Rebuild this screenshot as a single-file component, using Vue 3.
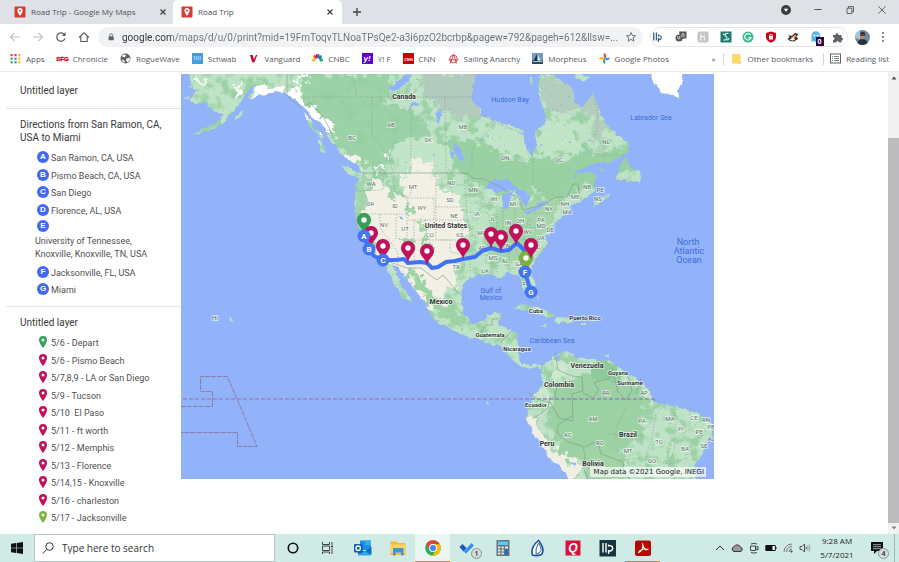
<script setup>
import { ref } from 'vue'

const address = ref('google.com/maps/d/u/0/print?mid=19FmToqvTLNoaTPsQe2-a3i6pzO2bcrbp&pagew=792&pageh=612&llsw=...')
const query = ref('')

const bookmarks = [
  ['apps', 'Apps'], ['sfg', 'Chronicle'], ['globe', 'RogueWave'], ['schwab', 'Schwab'],
  ['vanguard', 'Vanguard'], ['cnbc', 'CNBC'], ['yahoo', 'Y! F'], ['cnn', 'CNN'],
  ['anarchy', 'Sailing Anarchy'], ['boat', 'Morpheus'], ['photos', 'Google Photos'],
]

const stops = [
  ['A', 'San Ramon, CA, USA'], ['B', 'Pismo Beach, CA, USA'], ['C', 'San Diego'], ['D', 'Florence, AL, USA'],
  ['E', 'University of Tennessee, Knoxville, Knoxville, TN, USA'], ['F', 'Jacksonville, FL, USA'], ['G', 'Miami'],
]

const green = '#33a15a'
const berry = '#c2105c'
const lime = '#7cb342'
const days = [
  ['5/6 - Depart', green], ['5/6 - Pismo Beach', berry], ['5/7,8,9 - LA or San Diego', berry], ['5/9 - Tucson', berry],
  ['5/10  El Paso', berry], ['5/11 - ft worth', berry], ['5/12 - Memphis', berry], ['5/13 - Florence', berry],
  ['5/14,15 - Knoxville', berry], ['5/16 - charleston', berry], ['5/17 - Jacksonville', lime],
]

const states = [
  ['AB', 391, 125], ['MB', 463, 127], ['SK', 428, 140], ['BC', 352, 138], ['ON', 505, 158], ['QC', 559, 160], ['NL', 606, 142],
  ['WA', 371, 184], ['MT', 413, 187], ['OR', 370, 204], ['ID', 395, 206], ['WY', 422, 208], ['ND', 451, 183], ['SD', 450, 200],
  ['MN', 473, 190], ['WI', 494, 199], ['MI', 513, 204], ['NB', 587, 187], ['PE', 600, 190], ['NS', 598, 199], ['ME', 575, 197],
  ['NH', 565, 204], ['NY', 549, 209], ['MA', 567, 212], ['NV', 384, 225], ['UT', 405, 229], ['CO', 430, 235], ['NE', 454, 216],
  ['IA', 477, 214], ['IL', 493, 219], ['IN', 508, 223], ['OH', 520, 221], ['PA', 541, 220], ['MD', 541, 226], ['DE', 550, 230],
  ['KS', 460, 235], ['MO', 482, 233], ['WV', 528, 232], ['VA', 541, 238], ['NC', 536, 247], ['TN', 506, 246], ['AR', 482, 248],
  ['MS', 493, 258], ['AL', 505, 261], ['GA', 519, 264], ['LA', 485, 271], ['TX', 456, 267], ['FL', 526, 284], ['HI', 215, 318],
  ['RR', 606, 393], ['AP', 644, 393], ['AM', 593, 419], ['PA', 642, 421], ['MA', 670, 419], ['CE', 694, 418], ['RN', 706, 420],
  ['PI', 681, 429], ['PE', 699, 432], ['PB', 711, 427], ['AL', 711, 439], ['SE', 704, 446], ['BA', 685, 449], ['TO', 659, 442],
  ['AC', 568, 435], ['RO', 600, 443], ['MT', 628, 451], ['GO', 652, 461],
]
const countries = [
  ['Canada', 404, 96], ['United States', 446, 225], ['Mexico', 441, 301], ['Venezuela', 587, 365], ['Colombia', 559, 384],
  ['Brazil', 628, 434], ['Peru', 547, 443], ['Bolivia', 593, 463],
]
const smallCountries = [
  ['Cuba', 536, 311], ['Puerto Rico', 585, 318], ['Guatemala', 490, 335], ['Nicaragua', 517, 349], ['Guyana', 618, 373],
  ['Suriname', 630, 383], ['Ecuador', 536, 405],
]
const waters = [
  ['Hudson Bay', 510, 100], ['Labrador Sea', 651, 118], ['Gulf of', 491, 291], ['Mexico', 491, 298], ['Caribbean Sea', 552, 341],
]
const ocean = [['North', 688, 242], ['Atlantic', 689, 251], ['Ocean', 689, 260]]

const pins = [
  [364, 220, green], [371, 233, berry], [383, 246, berry], [408, 248, berry], [427, 251, berry], [463, 245, berry],
  [491, 234, berry], [501, 237, berry], [516, 231, berry], [526, 258, lime], [531, 245, berry],
]
const badges = [['A', 364, 236], ['B', 369, 249], ['C', 383, 260], ['F', 525, 272], ['G', 531, 292]]
</script>

<template>
  <div class="screen">
    <header>
      <div class="tabs">
        <button v-for="(t, i) in ['Road Trip - Google My Maps', 'Road Trip']" :key="t" class="tab" :class="{ active: i === 1 }">
          <svg class="i12" viewBox="0 0 12 12"><rect x=".5" y=".5" width="11" height="11" rx="1" fill="#d23f31" /><path d="M6 2a2.6 2.6 0 0 0-2.6 2.6C3.4 6.500 6 10 6 10s2.600-3.500 2.600-5.400A2.600 2.600 0 0 0 6 2z" fill="#fff" /><circle cx="6" cy="4.600" r="1" fill="#d23f31" /></svg>
          <span>{{ t }}</span>
          <svg class="i8" viewBox="0 0 8 8"><path d="M1.500 1.500l5 5m0-5l-5 5" stroke="#3c4043" stroke-width="1.200" /></svg>
        </button>
        <button class="plain newtab" aria-label="New tab"><svg class="i10" viewBox="0 0 10 10"><path d="M5 1v8M1 5h8" stroke="#3c4043" stroke-width="1.300" /></svg></button>
        <div class="window-controls">
          <button class="plain" aria-label="Tab search"><svg class="i10" viewBox="0 0 10 10"><circle cx="5" cy="5" r="5" fill="#3c4043" /><path d="M2.800 3.800h4.400L5 6.800z" fill="#fff" /></svg></button>
          <button class="plain" aria-label="Minimize"><svg class="i10" viewBox="0 0 10 10"><path d="M1.500 4.500h7" stroke="#444" stroke-width=".9" /></svg></button>
          <button class="plain" aria-label="Restore"><svg class="i10" viewBox="0 0 10 10" fill="none" stroke="#444" stroke-width=".8"><path d="M2 3.200h4.800V8.500H2zM3.500 3V1.600h5V7H7" /></svg></button>
          <button class="plain" aria-label="Close"><svg class="i10" viewBox="0 0 10 10"><path d="M1.500 1.500l7 7m0-7l-7 7" stroke="#444" stroke-width=".8" /></svg></button>
        </div>
      </div>

      <div class="toolbar">
        <div class="nav">
          <button class="plain" aria-label="Back"><svg class="i12" viewBox="0 0 12 12" fill="none" stroke="#bdc1c6" stroke-width="1.100"><path d="M11 6H1.500M5.500 2l-4 4 4 4" /></svg></button>
          <button class="plain" aria-label="Forward"><svg class="i12" viewBox="0 0 12 12" fill="none" stroke="#bdc1c6" stroke-width="1.100"><path d="M1 6h9.500M6.500 2l4 4-4 4" /></svg></button>
          <button class="plain" aria-label="Reload"><svg class="i12" viewBox="0 0 12 12" fill="none" stroke="#5f6368" stroke-width="1.300"><path d="M10 7.400A4.200 4.200 0 1 1 9 3.100" /><path d="M10.600 1v4H6.700z" fill="#5f6368" stroke="none" /></svg></button>
          <button class="plain" aria-label="Home"><svg class="i12" viewBox="0 0 12 12" fill="none" stroke="#5f6368" stroke-width="1.200"><path d="M1 6.500L6 1.800l5 4.700M2.800 5.500v5h6.400v-5" /></svg></button>
        </div>
        <label class="address">
          <svg class="i8" viewBox="0 0 8 10"><rect x="1" y="4" width="6.400" height="5" rx=".6" fill="#5f6368" /><path d="M2.400 4V2.700a1.800 1.800 0 0 1 3.600 0V4" fill="none" stroke="#5f6368" /></svg>
          <input v-model="address" type="text" aria-label="Address" />
          <svg class="i12" viewBox="0 0 12 12"><path d="M6 1.500l1.300 3 3.200.3-2.400 2.100.7 3.200L6 8.400l-2.800 1.700.7-3.200L1.500 4.800l3.200-.3z" fill="none" stroke="#5f6368" stroke-width=".9" /></svg>
        </label>
        <div class="extensions">
          <svg class="i12" viewBox="0 0 12 12" fill="none" stroke="#3d5f80" stroke-width="1.300"><path d="M1.700 1.500v8M4.400 1.500v8M6.500 3.500v2M6.500 7v4" /><path d="M6.800 4.800C10.200 4 10.200 9 6.800 8.500" stroke-width="1.100" /></svg>
          <svg class="i12" viewBox="0 0 12 12"><path d="M4 .5h7.500v7H8L6 10z" fill="#555" /><circle cx="4" cy="7" r="3.500" fill="#555" /><path d="M2.800 5v2.500q1 1 2 0V5M7 6V3q1.200-1 2 0v3" fill="none" stroke="#eee" stroke-width=".8" /></svg>
          <svg class="i12" viewBox="0 0 12 12"><rect x=".5" y=".5" width="11" height="11" rx="2" fill="#c4c4c4" /><path d="M3.800 2.500v7M3.800 6l3.400-1v4.500M7.500 2.500v1" stroke="#fff" fill="none" /></svg>
          <svg class="i12" viewBox="0 0 12 12"><rect x=".5" y=".5" width="11" height="11" fill="#1f7a70" /><path d="M8.500 2.500C5 1.800 4 4 6 5.500s1 4-2.500 3.500M3 3l2 1M9 7L7.500 9.500" stroke="#d6f1ec" fill="none" stroke-width="1.200" /></svg>
          <svg class="i12" viewBox="0 0 12 12"><circle cx="6" cy="6" r="5.500" fill="#35b88f" /><path d="M8.600 4A3.200 3.200 0 1 0 9 6.700H6.500" fill="none" stroke="#fff" stroke-width="1.200" /></svg>
          <svg class="i12" viewBox="0 0 12 12"><path d="M6 .5L11 2v4c0 3-2 4.500-5 5.700C3 10.500 1 9 1 6V2z" fill="#d0021b" /><rect x="4" y="5" width="4" height="3.500" fill="#fff" /><path d="M4.800 5V3.700q1.200-1 2.400 0V5" fill="none" stroke="#fff" stroke-width=".8" /></svg>
          <svg class="i12" viewBox="0 0 12 12"><path d="M.5 8l2-2L1 4.500l4 .3L8 2l3.500 1-2 2.500L11 8l-4 2.500-4-.5z" fill="#33302d" /><path d="M3.500 7l5-3.500 1 1-2 3z" fill="#e7a64c" /><path d="M2.500 8.500l4-2 1.500 2.500-3 .5z" fill="#fff" /></svg>
          <span class="ghost">
            <svg class="i12" viewBox="0 0 12 12"><path d="M1.500 11V4.500a4.300 4.300 0 0 1 8.600 0V11L8 9.800l-2.200 1.400-2-1.400z" fill="#55b3ec" /><circle cx="4.300" cy="4.500" r="1" fill="#fff" /><circle cx="7.500" cy="4.500" r="1" fill="#fff" /></svg>
            <b>0</b>
          </span>
          <svg class="i12" viewBox="0 0 12 12"><path d="M1 4h2.500a1.500 1.500 0 1 1 3-.5V4H9.500v2.500a1.500 1.500 0 1 1 0 3V11.500H7a1.500 1.500 0 0 0-3 0H1V9a1.500 1.500 0 0 0 0-3z" fill="#5f6368" /></svg>
        </div>
        <svg class="i15" viewBox="0 0 15 15"><circle cx="7.500" cy="7.500" r="7.500" fill="#6f8aa2" /><path d="M0 7.500a7.500 7.500 0 0 1 5-7v9z" fill="#a9c4da" /><path d="M2.500 13q1-4 5-4t5 4a7.500 7.500 0 0 1-10 0z" fill="#26313d" /><ellipse cx="7.700" cy="5.800" rx="2.600" ry="3.500" fill="#b98467" /><path d="M5 4.500q.3-2.800 2.800-2.800t2.600 2.800z" fill="#35302d" /><path d="M5.200 5.200h5" stroke="#222" /></svg>
        <button class="plain" aria-label="Menu"><svg class="i12" viewBox="0 0 12 12" fill="#5f6368"><circle cx="6" cy="2" r="1" /><circle cx="6" cy="6" r="1" /><circle cx="6" cy="10" r="1" /></svg></button>
      </div>

      <nav class="bookmarks">
        <a v-for="[icon, name] in bookmarks" :key="name" href="#">
          <svg class="i11" viewBox="0 0 11 11">
            <g v-if="icon === 'apps'"><rect x="0.500" y="1" width="2.200" height="2.200" fill="#ea4335" /><rect x="4.400" y="1" width="2.200" height="2.200" fill="#ea4335" /><rect x="8.300" y="1" width="2.200" height="2.200" fill="#fbbc04" /><rect x="0.500" y="4.600" width="2.200" height="2.200" fill="#34a853" /><rect x="4.400" y="4.600" width="2.200" height="2.200" fill="#4285f4" /><rect x="8.300" y="4.600" width="2.200" height="2.200" fill="#fbbc04" /><rect x="0.500" y="8.200" width="2.200" height="2.200" fill="#34a853" /><rect x="4.400" y="8.200" width="2.200" height="2.200" fill="#34a853" /><rect x="8.300" y="8.200" width="2.200" height="2.200" fill="#fbbc04" /></g>
            <text v-else-if="icon === 'sfg'" class="heavy" x="5.500" y="8" font-size="6" fill="#cf1028" stroke="#cf1028" stroke-width=".4">SFG</text>
            <g v-else-if="icon === 'globe'"><circle cx="5.500" cy="5.500" r="5" fill="#5f6368" /><path d="M1.500 3l3 1.500 1.500-2L5 1.200 3 2zM6 6l3.500-1.500L10 7 7.500 9.500 6.500 8zM2 6.500l2.500 1V10L2.500 8.500z" fill="#fff" /></g>
            <g v-else-if="icon === 'schwab'"><rect width="11" height="11" fill="#3f9fdf" /><path d="M1.500 4h8M2 6h7" stroke="#d7eefb" stroke-width="1.100" stroke-dasharray="1.500 .5" /></g>
            <path v-else-if="icon === 'vanguard'" d="M2 2h2.700l1.200 4.500L8 2h1.300L6.400 9.300H4.200z" fill="#c20029" />
            <g v-else-if="icon === 'cnbc'"><ellipse cx="1.800" cy="7" rx="1.800" ry="1.500" fill="#fcb711" /><ellipse cx="2.800" cy="4" rx="1.500" ry="2.200" transform="rotate(-35 2.800 4)" fill="#f37021" /><ellipse cx="4.700" cy="3.300" rx="1.200" ry="2.300" fill="#cc004c" /><ellipse cx="6.500" cy="3.300" rx="1.200" ry="2.300" fill="#6460aa" /><ellipse cx="8.200" cy="4.300" rx="1.500" ry="2.200" transform="rotate(35 8.200 4.300)" fill="#0089d0" /><ellipse cx="9.200" cy="7" rx="1.800" ry="1.500" fill="#0db14b" /></g>
            <g v-else-if="icon === 'yahoo'"><rect width="11" height="11" fill="#6001d2" /><text class="heavy" x="5" y="8" font-size="8" font-style="italic" fill="#fff">y!</text></g>
            <g v-else-if="icon === 'cnn'"><rect width="11" height="11" fill="#c00" /><text class="heavy" x="5.500" y="7.500" font-size="4" fill="#fff">CNN</text></g>
            <g v-else-if="icon === 'anarchy'" fill="none" stroke="#d64a58"><circle cx="5.500" cy="6" r="3.800" /><path d="M2.500 10.500L5.500 1l3 9.500M.5 6.800h10" /></g>
            <g v-else-if="icon === 'boat'"><rect width="11" height="11" fill="#6d9cc6" /><rect y="7.500" width="11" height="3.500" fill="#344a60" /><path d="M5 1v7H1.500z" fill="#233" /><path d="M6 1.500l2.500 6H6z" fill="#dfe6ec" /><path d="M1 8.500h9" stroke="#ddd" stroke-width=".8" /></g>
            <g v-else><path d="M5.300 5.300V.5a2.700 2.700 0 0 1 0 4.800z" fill="#ea4335" stroke="#ea4335" /><path d="M5.700 5.300h4.800a2.700 2.700 0 0 1-4.800 0z" fill="#4285f4" stroke="#4285f4" /><path d="M5.700 5.900v4.600a2.700 2.700 0 0 1 0-4.600z" fill="#34a853" stroke="#34a853" /><path d="M5.200 5.900H.5a2.700 2.700 0 0 1 4.700 0z" fill="#fbbc04" stroke="#fbbc04" /></g>
          </svg>{{ name }}
        </a>
        <div class="bookmarks-end">
          <button class="plain more">»</button>
          <a href="#"><svg class="i11" viewBox="0 0 11 11"><path d="M1 1h8.500v9.500H1z" fill="#fbd96b" /><path d="M9.500 8v2.500H7z" fill="#f0c038" /></svg>Other bookmarks</a>
          <a href="#"><svg class="i11" viewBox="0 0 11 11" fill="none" stroke="#5f6368"><rect x=".5" y="1" width="10" height="9" /><path d="M2 3.500h1M4 3.500h5M2 5.500h1M4 5.500h5M2 7.500h1M4 7.500h5" stroke-width=".8" /></svg>Reading list</a>
        </div>
      </nav>
    </header>

    <main>
      <aside>
        <section class="first"><h2>Untitled layer</h2></section>
        <section>
          <h2>Directions from San Ramon, CA, USA to Miami</h2>
          <ul>
            <li v-for="[letter, name] in stops" :key="letter" :class="{ long: letter === 'E' }"><i class="dot">{{ letter }}</i><span>{{ name }}</span></li>
          </ul>
        </section>
        <section>
          <h2>Untitled layer</h2>
          <ul>
            <li v-for="[name, color] in days" :key="name">
              <svg class="pin" viewBox="0 0 12 12"><path d="M6 0a4 4 0 0 0-4 4C2 7 6 12 6 12s4-5 4-8a4 4 0 0 0-4-4z" :fill="color" /><circle cx="6" cy="4" r="1.500" fill="#fff" /></svg><span>{{ name }}</span>
            </li>
          </ul>
        </section>
      </aside>

      <svg class="map" viewBox="181 74 533 405" role="img" aria-label="Road trip map">
        <defs>
          <filter id="rough" x="-5%" y="-5%" width="110%" height="110%" color-interpolation-filters="sRGB">
            <feTurbulence type="fractalNoise" baseFrequency=".11" numOctaves="4" seed="4" />
            <feDisplacementMap in="SourceGraphic" scale="20" xChannelSelector="R" yChannelSelector="G" />
          </filter>
          <filter id="coast" x="-5%" y="-5%" width="110%" height="110%" color-interpolation-filters="sRGB">
            <feTurbulence type="fractalNoise" baseFrequency=".16" numOctaves="3" seed="9" />
            <feDisplacementMap in="SourceGraphic" scale="5" xChannelSelector="R" yChannelSelector="G" />
          </filter>
          <filter id="mottle" x="0" y="0" width="100%" height="100%" color-interpolation-filters="sRGB">
            <feTurbulence type="fractalNoise" baseFrequency=".09" numOctaves="5" seed="12" />
            <feColorMatrix values="0 0 0 0 .61  0 0 0 0 .82  0 0 0 0 .65  5 0 0 0 -2.400" />
          </filter>
          <filter id="specks" x="0" y="0" width="100%" height="100%" color-interpolation-filters="sRGB">
            <feTurbulence type="fractalNoise" baseFrequency=".25" numOctaves="2" seed="31" />
            <feColorMatrix values="0 0 0 0 .57  0 0 0 0 .7  0 0 0 0 .97  0 14 0 0 -10.200" />
          </filter>
          <mask id="land" maskUnits="userSpaceOnUse" x="181" y="74" width="533" height="405">
            <g filter="url(#coast)" fill="#fff">
              <path d="M190 68l1 12-3 7 9 4-7 9 6 4 9-2 5 7 6 3 7 2-6 8-12 6-12 7 15-4 15-8 12-13 5-7 5-8 6-8 4-2-7 14 12-4 17-3 13 3 10 8 7 7 5 8 8 5 7 9 5 10 8 8 5 8 12 7 4 5-1 8-4 7-1 12-1 13 3 10 4 13 6 10 5 10 10 9 5 5 5 13 5 8 6 9 10 7-3-7-7-10-6-12-5-10 6 2 7 10 10 13 10 12 5 13 10 8 10 6 15 8 13 1 5 4 17 4 8 9 10 10 12 4 8-3 4 8v11l-9 12-5 10-1 12 6 13 9 13 8 14 15 13 7 12h123v-20l7-8 3-12 7-10 1-10-6-5-10-6-14-4-16-5-14-3-3-10-8-8-15-10-17-12-17-1-16-2-10-7-14 5-6 7-7 2-10 0-10-2-2-15-1-14-10-6-9-3 4-12h-14l-3 8-12 3-10-13-2-15 4-15 13-6 12-1 10 4 7-5 11 2 4 9 6 12 5 2v-9l-3-13 2-10 6-10 10-12-3-6 5-5 7-12 8-7 7-3-2-5 5-3 8-3 12-9 1-12-3-6h-13l-14 10 17-15 14-5 16-1 15-10v-9l-11-8-12-12-7-16-5-14-5 7-6 8-7-6-2-14-10-6-10-7-13-1-1 14 2 14 4 10v12l-10 8 2 14-5 10-7-9-2-16-23-9-18-6-2-7-7-8v-15l7-22z" />
              <path d="M518 272l13-4 2 10 3 12-1 8-7-2-6-10z" />
              <path d="M340 164l8 2 13 9-1 4-12-5z M318 140l5 2 3 11-4-1z M304 112l8 9 3 10-5-4z M235 116l8-6-2 7-6 3z M313 128l5 2 5 6-1 4z" />
              <path d="M615 180l7-19 6-5 1 11 10 4 2 12-9-2-8-1z M593 203l14-10 4 1-12 9-6 4z M583 178l12-5 1 5-12 4z M597 168l8 2-3 2z" />
              <path d="M513 308l9-4 12 3 14 5 8 4-7 2-14-5-12-3z M555 318l10-1 10 4-8 3-12-2z M540 325l7 0-1 2z M581 323l5 0v2h-5z" />
              <path d="M228 317l4 1 1 3-4-1z M220 310l2 1-1 1z M184 97l5-2 1 3-5 1z M486 402l2-1v3z M537 294l3 6h-2z M604 356l4-2v3z" />
              <path d="M650 68h33l-1 14-4 8 1 8-11-4-8-1-6-12z M530 78l3 0-1 6-2-1z M575 73l13 3-3 5-9-2z" />
            </g>
          </mask>
        </defs>
        <rect x="181" y="74" width="533" height="405" fill="#92b3fa" />
        <g mask="url(#land)">
          <rect x="181" y="74" width="533" height="405" fill="#bfe3c6" />
          <rect x="181" y="74" width="533" height="405" filter="url(#mottle)" />
          <g filter="url(#rough)">
            <path d="M300 74h90l-5 30 25 5 25 25-25 10-18 8-8 18 2 34-9-20 2-12-12-4-30-20-30-40z" fill="#97cfa2" opacity=".85" />
            <path d="M440 140l35 0 20 10 30 12 30-2 22-8 40-2 25-2-4 20-30 8-25 14-30 10-20-12-20 8-40-12-28-20z" fill="#9ad1a3" />
            <path d="M418 74h60l2 45-25-4-35-20z" fill="#b2cbbd" />
            <path d="M540 74l50 12 14 40-6 26-8-40-20 0-14 3-14-10z" fill="#b4cebd" />
            <path d="M545 120l28 4 10 25-25 5-25-8z" fill="#c2e5c8" />
            <path d="M395 140h40l20 12-4 20-38-1-20-10z" fill="#c2e4c7" />
            <path d="M497 125l28 12 4 20-30-6-20-10z" fill="#c2e4c7" />
            <path d="M500 205l40-5 25-5-15 30-15 25-25 15-25-15z" fill="#a5d5aa" />
            <path d="M375 174l-2 12-7 8-4 12 2 25 15 32 15 2 12 20 14 20 18 7 10 5-4-24 12-9-2-14 12-26-3-38-20-18-7-12-23-5-10 3-4 10 6 12-10-3z" fill="#f2efe4" />
            <path d="M412 165l6-6 14 5 2 10-20 2z" fill="#f2efe4" />
            <path d="M362 177l6 0 0 24-4 12 12 35 2 14-16-16-9-30 3-30z M405 205l4-2 4 12-5 2z M388 180l8 0 3 14-7 10z M420 215l5 10 8 32-7-4z M400 240l15-2-4 6z" fill="#a3d4aa" />
            <path d="M403 270l15 5 13 14 14 16 19 9 7 9-10 2-16-5-15-15z" fill="#9fd3a5" />
            <path d="M552 385l55-14 30 16 10 13-8 40-30 18-50 2-8-38z" fill="#9bd1a3" />
            <path d="M596 358l-6 20 30 4-5-18z" fill="#8fca9a" />
            <path d="M578 448l30 0 18 10 0 24h-38z" fill="#a0d3a6" />
            <path d="M526 412l6 1 8 20 12 16 13 6 12 10 0 14-10 6-20-20-20-30z" fill="#f1eee4" />
            <path d="M668 430l3 25-4 5zM553 360l20 2-20 26zM540 390l8-4-10 30z" fill="#cfe9d0" />
            <path d="M256 88l22-1 12 4 10-6 2 12 8 10 22 18 4 13-22-14-18-12-14-8-16-3-20 4z M300 74l10 8-12-3z M238 85l6-4-3 17-5 1z" fill="#fff" />
            <path d="M345 153l12 4 5 8-12-2z M380 150l8 4-2 6z M378 165l7 2-3 5z M190 86l14-8 2 6z" fill="#f2f3ee" />
            <path d="M640 68h60v34h-50z" fill="#fff" />
          </g>
          <rect x="400" y="74" width="210" height="100" filter="url(#specks)" />
          <g filter="url(#coast)" fill="#92b3fa">
            <path d="M388 89l8-5 6-8 10-3-2 8-8 6-8 3z M410 106l4-4 8 1-5 4z M437 110l4 4-2 10-3-8z M454 143l8 8 3 12-7-4-4-9z M450 147l4 6-2 10z" />
            <path d="M485 188l10-9 14 1 10 10-12 0-10 2z M503 195l10-5-4 12-2 10-4-4z M513 190l12 1 5 8-4 8-6-8z M523 212l12-5 9-4-2 4-14 7z M536 203l12-2-2 3-8 2z M400 216l3 2 0 3-3-2z M572 462l4 2 0 3-5-3z M555 358l4-3 1 7z" />
          </g>
        </g>

        <g class="borders">
          <path class="solid" d="M362 173h106l4 5 12 1 15 7 12 8 8 4 4 12 22-6 10-7 12 0 6-13 5 0 2 14 2 3M382 262l8 0 17 6h14l10 8 6 4 6-5 8 9 6 8 7 5M287 74v22l14 12 9-5 12 12 10 18M480 334l6-9h6v-6h7M500 343l12-12M517 349h-8M542 363v7M555 352l3 18 14 6 10 1 1 14-11 3 1 27-14-3-8-15-14-4-8-6M558 384l-3 10 0 6M550 396l-2 12-14 10M573 415l-15 10-1 8 11 9 14 4 3 8-1 15 4 10M585 447l13-6 3 13 22 8 1 12 12 10M583 393l10 5 6-8-5-7 15-5 4-10M614 376l4 16 8 8 6-10-4-13M641 378l-5 16" />
          <path class="dash" d="M300 97h174M372 97v38l18 24 3 14M411 97v76M445 97l1 76M473 149l22-27-15-8M472 149v24M495 122l28 12M533 159v28l20 8M593 95l5 20-2 20-14 10 12 10h30M352 74l4 15v8" />
          <path class="dash" d="M357 191l26-1v-17M357 214h50V198l4-4v-5M391 173l4 20 12 6M408 198h26v22h-27M436 173v46M407 214v26h45M396 214v24l-14 15M380 214l0 14 18 24v13M414 220v45M436 220v20M435 185h30M435 207h30M436 220h32M440 240h30M464 173l3 45 4 22M450 244v8l20 4v15M471 203h15M467 212h20l4 8M472 235h15l2 20h-18M497 210v18l-7 22M503 208v22M515 208v18M489 240h40M497 250v22M509 250v22M516 250l6 16-10 3M487 255l-2 8 11 1M528 220l-4 20h24M528 213h24M530 218v10h22M552 203l2 20M560 200l2 14h10" />
          <path class="dash" d="M627 406l-10 20-2 10 25-1M607 434l40 2M640 435l16-20 10-12M656 415l-5 26-6 18M667 430l8 14-6 24M645 459l24 5 18-6M690 408l0 20-20 14M675 406v22M700 420l-10 10 14 6M620 460l20-2M655 400v8" />
        </g>
        <path class="survey" d="M181 406.500h31.500v-15h-12v-15h27l29.500 70h-19.500v-14H181" />
        <path class="equator" d="M183 399h474" />

        <g class="state"><text v-for="([t, x, y], i) in states" :key="i" :x="x" :y="y + 2">{{ t }}</text></g>
        <g class="country"><text v-for="[t, x, y] in countries" :key="t" :x="x" :y="y + 3">{{ t }}</text></g>
        <g class="small"><text v-for="[t, x, y] in smallCountries" :key="t" :x="x" :y="y + 2">{{ t }}</text></g>
        <g class="water"><text v-for="[t, x, y] in waters" :key="t" :x="x" :y="y + 2">{{ t }}</text></g>
        <g class="ocean"><text v-for="[t, x, y] in ocean" :key="t" :x="x" :y="y + 3">{{ t }}</text></g>

        <path class="route" d="M364 236L369 249L374 256L383 260L396 260L404 259L408 263L420 262L427 263L432 268L438 267L446 262L455 261L463 259L475 257L482 251L491 248L501 251L509 250L517 243L524 250L528 256L525 272L531 292" />
        <g v-for="([x, y, color], i) in pins" :key="i" :transform="`translate(${x} ${y})`">
          <path d="M0-7a7 7 0 0 0-7 7C-7 5-1 8 0 14 1 8 7 5 7 0A7 7 0 0 0 0-7z" :fill="color" stroke="#00000033" stroke-width=".5" />
          <circle r="2.700" fill="#fff" />
        </g>
        <g v-for="[t, x, y] in badges" :key="t" class="badge"><circle :cx="x" :cy="y" r="6.500" /><text :x="x" :y="y + 3">{{ t }}</text></g>
        <rect x="590" y="467" width="116" height="10" fill="#ffffffb0" />
        <text class="credit" x="704" y="474">Map data ©2021 Google, INEGI</text>
      </svg>

      <div class="scrollbar">
        <svg class="i8" viewBox="0 0 8 8"><path d="M1.500 5.500h5L4 2.500z" fill="#505050" /></svg>
        <div class="track"><div class="thumb"></div></div>
        <svg class="i8" viewBox="0 0 8 8"><path d="M1.500 2.500h5L4 5.500z" fill="#808080" /></svg>
      </div>
    </main>

    <footer>
      <button class="plain start" aria-label="Start"><svg class="i12" viewBox="0 0 12 12" fill="#111"><path d="M0 1.800L5 1v4.700H0zM5.600 .9L12 0v5.700H5.600zM0 6.300h5V11L0 10.200zM5.600 6.300H12V12l-6.400-.9z" /></svg></button>
      <label class="search">
        <svg class="i12" viewBox="0 0 12 12" fill="none" stroke="#333"><circle cx="7.500" cy="4.500" r="3.800" /><path d="M4.800 7.300L.8 11.500" /></svg>
        <input v-model="query" type="text" placeholder="Type here to search" />
      </label>
      <div class="apps">
        <button class="plain" aria-label="Cortana"><svg class="i18" viewBox="0 0 18 18"><circle cx="9" cy="9" r="4.700" fill="none" stroke="#111" stroke-width="1.600" /></svg></button>
        <button class="plain" aria-label="Task View"><svg class="i18" viewBox="0 0 18 18" fill="none" stroke="#333" stroke-width=".9"><path d="M3.500 3v2.500h7V3M3.500 15v-2h7v2M3.500 7h7v4.500h-7zM13 3v3M13 9v6" /><path d="M12 7.500h2" stroke-width="1.500" /></svg></button>
        <button class="plain" aria-label="Outlook"><svg class="i18" viewBox="0 0 18 18"><path d="M6 1.500h11V11H6z" fill="#1d8fe0" /><path d="M11.500 1.500H17V6h-5.500z" fill="#35b0f0" /><path d="M4 9l6.500 3.500L17.500 8v7.500H4z" fill="#0f6fc4" /><path d="M4 16l7-4 6.500 4.500H4z" fill="#2da5ea" /><rect x="0" y="5" width="8.500" height="8.500" rx="1" fill="#0f5fb4" /><circle cx="4.200" cy="9.200" r="2.200" fill="none" stroke="#fff" stroke-width="1.300" /></svg></button>
        <button class="plain" aria-label="File Explorer"><svg class="i18" viewBox="0 0 18 18"><path d="M1.500 2.500h6l1 1.500h8v12h-15z" fill="#f5b93a" /><path d="M1.500 5.500h15V14h-15z" fill="#fcd462" /><path d="M4 9h10.500v7.500H12v-3H6.500v3H4z" fill="#3c96dc" /></svg></button>
        <button class="plain open current" aria-label="Chrome"><svg class="i18" viewBox="0 0 18 18"><circle cx="9" cy="9" r="7.800" fill="#34a853" /><path d="M2.200 5.200A7.800 7.800 0 0 1 15.800 5.200L9 6z" fill="#ea4335" /><path d="M2.200 5.200L6 11l3-5.500z" fill="#ea4335" /><path d="M15.900 5.300A7.800 7.800 0 0 1 8.300 16.800L12.400 10.500 9 5.300z" fill="#fbbc04" /><circle cx="9" cy="9" r="3.900" fill="#fff" /><circle cx="9" cy="9" r="3" fill="#4285f4" /></svg></button>
        <button class="plain counted" aria-label="To Do"><svg class="i18" viewBox="0 0 18 18"><path d="M.5 8L3.500 5l4 4-3 3.500z" fill="#185abd" /><path d="M4.500 12.500L12.500 4 15 6.500 7.200 14.500z" fill="#3b8fee" /></svg><b>1</b></button>
        <button class="plain" aria-label="Calculator"><svg class="i18" viewBox="0 0 18 18"><rect x="2.500" y="1" width="13" height="16" fill="#667480" /><rect x="4" y="2.500" width="10" height="3.500" fill="#5cc8f5" /><path d="M4 7.500h2.300v2H4zM7.500 7.500h2.300v2H7.500zM11 7.500h3v2h-3zM4 10.500h2.300v2H4zM7.500 10.500h2.300v2H7.500zM4 13.500h2.300v2H4zM7.500 13.500h2.300v2H7.500z" fill="#e4e9ed" /><path d="M11 10.500h3v5h-3z" fill="#1c70b8" /></svg></button>
        <button class="plain" aria-label="Sailing"><svg class="i18" viewBox="0 0 18 18"><path d="M9.500 1.500C4 6 2 11 3.500 16q4 1.500 9-.5 4-5-3-14z" fill="#fff" stroke="#1d4d9b" stroke-width="1.600" /><path d="M9.500 4Q6 10 7 15.500q4-1 5-4Q12.500 8 9.500 4z" fill="#fff" stroke="#2b61b0" /></svg></button>
        <button class="plain" aria-label="Quicken"><svg class="i18" viewBox="0 0 18 18"><rect x="1.500" y="1.500" width="15" height="15" fill="#d8123c" /><text class="heavy" x="9" y="13" font-size="12" font-style="italic" fill="#fff">Q</text></svg></button>
        <button class="plain" aria-label="Predict"><svg class="i18" viewBox="0 0 18 18"><rect x=".5" y="1" width="16.500" height="16.500" fill="#17353d" /><path d="M4 4v9.500M7 4v9.500M9.600 5.500v2M9.600 11v4" fill="none" stroke="#fff" stroke-width="1.400" /><path d="M9.600 6.800C15 5.500 15 12.800 9.600 12" fill="none" stroke="#fff" stroke-width="1.400" /></svg></button>
        <button class="plain open" aria-label="Acrobat"><svg class="i18" viewBox="0 0 18 18"><rect x="1" y="1.500" width="16" height="15.500" rx="2" fill="#b30b00" /><path d="M8.500 4.500c1.500 4-1 8-3.800 9 .3-2.500 5-4 9-3.200-2 1.500-5-2-5.200-5.800z" fill="none" stroke="#fff" stroke-width="1.100" /></svg></button>
      </div>
      <div class="tray">
        <svg class="i12" viewBox="0 0 12 12" fill="none" stroke="#333"><path d="M2 8l4-4 4 4" /></svg>
        <svg class="i12" viewBox="0 0 12 12"><path d="M3 9.500a2.500 2.500 0 0 1 0-4.800 3.600 3.600 0 0 1 6.500.5A2.200 2.200 0 0 1 9.500 9.500z" fill="#999" stroke="#333" /></svg>
        <svg class="i12" viewBox="0 0 12 12" fill="none" stroke="#333" stroke-width=".9"><path d="M2.500 4h5v4.500h-5zM7.500 5.500l2.500-1v3.500l-2.500-1M3 2q3-1.500 6 0M3 10.500q3 1.200 6 0" /></svg>
        <svg class="i12" viewBox="0 0 12 12"><path d="M.8 3.500h9.500v5H.8z" fill="#fff" stroke="#111" /><path d="M1 4h6.500v4H1zM10.500 5h1v2h-1z" fill="#111" /></svg>
        <svg class="i12" viewBox="0 0 12 12" fill="none" stroke="#777"><path d="M2 10A8 8 0 0 1 10 2M4.500 10A5.500 5.500 0 0 1 10 4.500M7 10a3 3 0 0 1 3-3" /><circle cx="9.500" cy="9.500" r=".8" fill="#333" /></svg>
        <svg class="i12" viewBox="0 0 12 12" fill="none" stroke="#444" stroke-width=".9"><path d="M1 4.500h2L5.500 2v8L3 7.500H1zM7 4.500q1 1.500 0 3" /><path d="M8.500 3.500q1.500 2.500 0 5M10 2.500q2 3.500 0 7" stroke="#999" /></svg>
      </div>
      <time>9:28 AM<br />5/7/2021</time>
      <button class="plain counted notes" aria-label="Notifications"><svg class="i12" viewBox="0 0 12 12"><path d="M0 0h12v9H6l-3 3V9H0z" fill="#111" /><path d="M2 2.700h8M2 4.700h8M2 6.700h8" stroke="#cfeae4" stroke-width=".7" /></svg><b>4</b></button>
    </footer>
  </div>
</template>

<style>
body { margin: 0; }
</style>

<style scoped>
* { box-sizing: border-box; }
.screen { display: flex; flex-direction: column; min-height: 100vh; background: #fff; font: 8px/12px "Open Sans", sans-serif; color: #4a4d51; }
svg { display: block; flex: none; }
.i8 { width: 8px; height: 8px; }
.i10 { width: 10px; height: 10px; }
.i11 { width: 11px; height: 11px; overflow: visible; }
.i12 { width: 12px; height: 12px; }
.i15 { width: 15px; height: 15px; }
.i18 { width: 18px; height: 18px; }
.heavy { font-family: "Liberation Sans", sans-serif; font-weight: 700; text-anchor: middle; }
.plain { display: flex; align-items: center; justify-content: center; padding: 0; border: 0; background: none; font: inherit; color: inherit; }
input { min-width: 0; padding: 0; border: 0; outline: 0; background: none; font: inherit; }

.tabs { display: flex; height: 24px; background: #dee1e6; }
.tab { display: flex; align-items: center; gap: 5px; width: 169px; padding: 0 8px; border: 0; background: none; font: inherit; color: #505357; text-align: left; }
.tab:first-child { width: 173px; padding: 0 6px 0 14px; }
.tab span { flex: 1; }
.tab.active { border-radius: 5px 5px 0 0; background: #fff; }
.newtab { width: 30px; }
.window-controls { display: flex; gap: 22px; margin-left: auto; padding: 0 12px 4px 0; }

.toolbar { display: flex; align-items: center; gap: 7px; height: 26px; padding: 0 10px 0 9px; }
.nav { display: flex; gap: 11px; width: 82px; }
.address { display: flex; flex: 1; align-items: center; gap: 7px; height: 20px; padding: 0 6px 0 9px; border-radius: 10px; background: #f0f2f4; }
.address input { flex: 1; height: 18px; color: transparent; font-family: Roboto, sans-serif; font-size: 10px; background: linear-gradient(90deg, #303236 50px, #6d7175 50px); background-clip: text; -webkit-background-clip: text; }
.extensions { display: flex; align-items: center; justify-content: space-between; width: 198px; height: 20px; padding: 0 3px 0 1px; border: 1px solid #e4e6e9; border-radius: 10px; }
.ghost { position: relative; }
.ghost b { position: absolute; left: 6px; top: 6px; width: 8px; height: 9px; background: #30063a; color: #fff; font-size: 7px; line-height: 9px; text-align: center; }

.bookmarks { display: flex; align-items: center; gap: 12px; height: 22px; padding: 0 10px 4px; border-bottom: 1px solid #e8eaec; }
.bookmarks a { display: flex; align-items: center; gap: 5px; color: #55585c; text-decoration: none; white-space: nowrap; }
.bookmarks-end { display: flex; align-items: center; margin-left: auto; }
.bookmarks-end a { margin-left: 8px; padding-left: 7px; border-left: 1px solid #d5d7da; }
.bookmarks-end a + a { margin-left: 10px; padding-left: 6px; }

main { display: flex; flex: 1; align-items: flex-start; }
aside { flex: 0 0 181px; padding: 0 0 0 6px; font: 9px/14px Roboto, sans-serif; color: #505050; }
section { padding: 9px 10px 8px 14px; border-top: 1px solid #e6e6e6; }
section.first { padding-top: 12px; padding-bottom: 11px; border-top: 0; }
section:last-child { padding-bottom: 4px; }
h2 { margin: 0; font-size: 10px; line-height: 13px; font-weight: 400; color: #383838; }
ul { margin: 4px 0 0; padding: 0 0 0 15px; list-style: none; }
li { display: flex; align-items: center; gap: 2px; height: 17px; white-space: pre; }
li:nth-child(odd) { margin-bottom: 1px; }
li span { padding-top: 3px; }
.pin { width: 12px; height: 12px; margin-left: 2px; }
.dot { display: block; flex: none; width: 12px; height: 12px; margin-left: 2px; border-radius: 6px; background: #4169f6; color: #fff; font: 700 8px/12px "Liberation Sans", sans-serif; text-align: center; }
.long { flex-direction: column; align-items: flex-start; gap: 0; height: 44px; padding-top: 2px; line-height: 13px; white-space: normal; }

.map { flex: 0 1 533px; min-width: 0; margin-top: 2px; }
.map text { font-family: Roboto, sans-serif; text-anchor: middle; paint-order: stroke; stroke-linejoin: round; }
.map .state text { font-size: 6px; fill: #5c7168; stroke: #ffffff90; stroke-width: 2px; }
.map .country text { font-size: 7px; font-weight: 700; fill: #333; stroke: #ffffff90; stroke-width: 2px; }
.map .small text { font-size: 6px; font-weight: 500; fill: #222; stroke: #ffffff90; stroke-width: 2px; }
.map .water text { font-size: 7px; fill: #3f6bd6; }
.map .ocean text { font-size: 9px; fill: #3f6bd6; }
.map .badge circle { fill: #4474f4; }
.map .badge text { font-size: 8px; font-weight: 700; fill: #fff; }
.map .credit { font-family: "DejaVu Sans", sans-serif; font-size: 7px; fill: #222; text-anchor: end; }
.borders path { fill: none; stroke: #7d9686; stroke-width: 0.6px; }
.borders .dash { stroke: #84a08f; stroke-dasharray: 1.5 1.5; }
.survey { fill: none; stroke: #8a7ba8; stroke-width: 1px; stroke-dasharray: 5 1; }
.equator { fill: none; stroke: #9488b8; stroke-width: 1.5px; stroke-dasharray: 4 2; }
.route { fill: none; stroke: #4272f8; stroke-width: 4px; stroke-linejoin: round; stroke-linecap: round; }

.scrollbar { display: flex; flex-direction: column; align-items: center; align-self: stretch; width: 11px; margin-left: auto; padding: 2px 0; background: #f1f1f1; }
.track { flex: 1; align-self: stretch; padding: 56px 0 1px; }
.thumb { height: 100%; background: #bcbcbf; }

footer { display: flex; align-items: stretch; height: 28px; background: #d0ebe5; color: #222; }
.start { width: 34px; }
.search { display: flex; align-items: center; gap: 8px; width: 241px; padding: 0 7px; border: 1px solid #b9c6c3; background: #fff; }
.search input { flex: 1; font-size: 10px; }
.search input::placeholder { color: #333; opacity: 1; }
.apps { display: flex; }
.apps button { width: 35px; border-bottom: 1px solid transparent; }
.apps .current { background: #eaf6f4; }
.apps .open { border-bottom-color: #c9873f; }
.counted { position: relative; }
.counted b { position: absolute; left: 21px; top: 14px; width: 11px; height: 11px; border: 1px solid #8c9794; border-radius: 6px; background: #d5dedb; font-size: 7px; font-weight: 600; line-height: 9px; text-align: center; }
.tray { display: flex; align-items: center; gap: 5px; margin-left: auto; }
time { width: 52px; line-height: 14px; text-align: center; }
.notes { width: 28px; margin-right: 3px; }
.notes b { left: 15px; }
footer::after { content: ""; width: 4px; border-left: 1px solid #9fb5b0; }
</style>
